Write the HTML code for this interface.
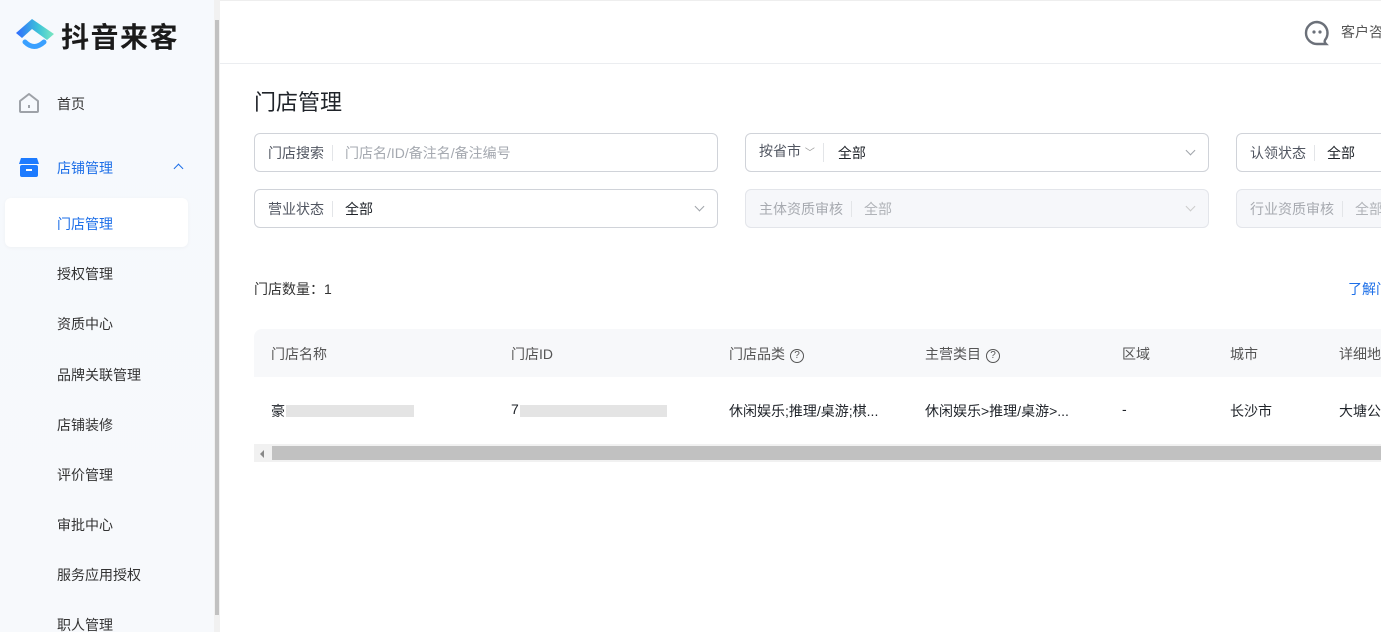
<!DOCTYPE html>
<html><head><meta charset="utf-8"><style>
*{box-sizing:border-box;margin:0;padding:0}
body{width:1381px;height:632px;overflow:hidden;font-family:"Liberation Sans","Noto Sans CJK SC",sans-serif;background:#fff;position:relative;color:#1f2329}
.side{position:absolute;left:0;top:0;width:214px;height:632px;background:linear-gradient(180deg,#f6f9fd,#f7f9fc)}
.sb{position:absolute;left:214px;top:0;width:6px;height:632px;background:#f1f1f1}
.sb div{position:absolute;left:1px;top:20px;width:4px;height:595px;background:#c1c1c1}
.logo{position:absolute;left:61px;top:16px;font-size:28px;font-weight:bold;letter-spacing:1.5px;color:#1b1b1b}
.nav{position:absolute;left:57px;font-size:14px;color:#333}
.act{position:absolute;left:5px;top:198px;width:183px;height:49px;background:#fff;border-radius:6px;box-shadow:0 1px 4px rgba(0,0,0,.04)}
.hdr{position:absolute;left:220px;top:0;right:0;height:64px;border-bottom:1px solid #ebedf0;border-top:1px solid #eee}
.title{position:absolute;left:254px;top:85px;font-size:22px;color:#1f2329}
.inp{position:absolute;height:39px;border:1px solid #d0d3d9;border-radius:6px;font-size:14px;display:flex;align-items:center;padding-left:13px;white-space:nowrap;overflow:hidden}
.inp .l{color:#505560;padding-right:8px;border-right:1px solid #e3e5e8;line-height:16px;margin-right:12px}
.inp.dis{background:#f6f7fa;border-color:#e3e5ea;color:#b0b3b8}
.inp.dis .l{color:#a7aab0}
.chev{position:absolute;right:14px;top:13px;width:7px;height:7px;border-right:1px solid #a0a4aa;border-bottom:1px solid #a0a4aa;transform:rotate(45deg)}
.th{position:absolute;top:329px;left:254px;right:0;height:48px;background:#f7f8fa;border-radius:8px 0 0 0}
.t{position:absolute;font-size:14px;white-space:nowrap}
.q{display:inline-block;width:14px;height:14px;border:1.3px solid #555;border-radius:50%;font-size:10px;text-align:center;line-height:12px;margin-left:5px;vertical-align:1px}
.blur{position:absolute;height:12px;background:#ddd;opacity:.8}
</style></head><body>
<div class="side">
<svg style="position:absolute;left:14px;top:17px" width="42" height="36" viewBox="0 0 42 36"><defs><linearGradient id="g" x1="0" y1="0" x2="1" y2="0"><stop offset="0" stop-color="#2f6bff"/><stop offset=".6" stop-color="#3ec4d8"/><stop offset="1" stop-color="#7be8c0"/></linearGradient></defs><path d="M2 16 L18 2 L40 17 L33 23 L18 12 L8 21 Z" fill="url(#g)"/><path d="M11 25 Q20 34 30 25" stroke="#3aa0ff" stroke-width="5" fill="none" stroke-linecap="round"/></svg>
<div class="logo">抖音来客</div>
<svg style="position:absolute;left:18px;top:92px" width="22" height="22" viewBox="0 0 22 22"><path d="M2 9 L11 2 L20 9 V19 Q20 20 19 20 H3 Q2 20 2 19 Z" fill="none" stroke="#9ea2a8" stroke-width="2" stroke-linejoin="round"/><rect x="10" y="13" width="2" height="3" fill="#9ea2a8"/></svg>
<div class="nav" style="top:94px">首页</div>
<svg style="position:absolute;left:18px;top:157px" width="22" height="22" viewBox="0 0 22 22"><path d="M3 1 H19 L21 7 H1 Z" fill="#1d7bff"/><rect x="2" y="8" width="18" height="12" rx="2" fill="#1d7bff"/><rect x="8" y="12" width="6" height="2" fill="#fff"/></svg>
<div class="nav" style="top:158px;color:#1d6fe8">店铺管理</div>
<div style="position:absolute;left:175px;top:165px;width:7px;height:7px;border-left:1.5px solid #1d6fe8;border-top:1.5px solid #1d6fe8;transform:rotate(45deg)"></div>
<div class="act"></div>
<div class="nav" style="top:214px;color:#1d6fe8">门店管理</div>
<div class="nav" style="top:264px">授权管理</div>
<div class="nav" style="top:314px">资质中心</div>
<div class="nav" style="top:365px">品牌关联管理</div>
<div class="nav" style="top:415px">店铺装修</div>
<div class="nav" style="top:465px">评价管理</div>
<div class="nav" style="top:515px">审批中心</div>
<div class="nav" style="top:565px">服务应用授权</div>
<div class="nav" style="top:615px">职人管理</div>
</div>
<div class="sb"><div></div></div>
<div class="hdr"></div>
<svg style="position:absolute;left:1304px;top:20px" width="26" height="26" viewBox="0 0 26 26"><path d="M13 2 A11 11 0 1 0 13 24 H22 Q20 22 21 20 A11 11 0 0 0 13 2 Z" fill="none" stroke="#6b7079" stroke-width="2.4"/><circle cx="10" cy="12" r="1.6" fill="#6b7079"/><circle cx="16" cy="12" r="1.6" fill="#6b7079"/></svg>
<div class="t" style="left:1341px;top:22px;color:#555">客户咨询</div>
<div class="title">门店管理</div>
<div class="inp" style="left:254px;top:133px;width:464px"><span class="l">门店搜索</span><span style="color:#a5a9b0">门店名/ID/备注名/备注编号</span></div>
<div class="inp" style="left:745px;top:133px;width:464px"><span class="l">按省市 <span style="font-size:10px;color:#999">﹀</span></span><span style="margin-left:2px">全部</span><i class="chev"></i></div>
<div class="inp" style="left:1236px;top:133px;width:200px"><span class="l">认领状态</span><span>全部</span></div>
<div class="inp" style="left:254px;top:189px;width:464px"><span class="l">营业状态</span><span>全部</span><i class="chev"></i></div>
<div class="inp dis" style="left:745px;top:189px;width:464px"><span class="l">主体资质审核</span><span>全部</span><i class="chev" style="border-color:#ccc"></i></div>
<div class="inp dis" style="left:1236px;top:189px;width:200px"><span class="l">行业资质审核</span><span>全部</span></div>
<div class="t" style="left:254px;top:279px;color:#333">门店数量：1</div>
<div class="t" style="left:1348px;top:279px;color:#1d6fe8">了解门店</div>
<div class="th"></div>
<div class="t" style="left:271px;top:344px;color:#555">门店名称</div>
<div class="t" style="left:511px;top:344px;color:#555">门店ID</div>
<div class="t" style="left:729px;top:344px;color:#555">门店品类<span class="q">?</span></div>
<div class="t" style="left:925px;top:344px;color:#555">主营类目<span class="q">?</span></div>
<div class="t" style="left:1122px;top:344px;color:#555">区域</div>
<div class="t" style="left:1230px;top:344px;color:#555">城市</div>
<div class="t" style="left:1339px;top:344px;color:#555">详细地址</div>
<div class="t" style="left:271px;top:401px">豪</div>
<div class="blur" style="left:286px;top:405px;width:128px"></div>
<div class="t" style="left:511px;top:401px">7</div>
<div class="blur" style="left:520px;top:405px;width:147px"></div>
<div class="t" style="left:729px;top:401px">休闲娱乐;推理/桌游;棋...</div>
<div class="t" style="left:925px;top:401px">休闲娱乐&gt;推理/桌游&gt;...</div>
<div class="t" style="left:1122px;top:401px">-</div>
<div class="t" style="left:1230px;top:401px">长沙市</div>
<div class="t" style="left:1339px;top:401px">大塘公</div>
<div style="position:absolute;left:254px;top:444px;right:0;height:18px;background:#f1f1f1"></div>
<div style="position:absolute;left:260px;top:450px;width:0;height:0;border-top:4px solid transparent;border-bottom:4px solid transparent;border-right:4px solid #888"></div>
<div style="position:absolute;left:272px;top:446px;right:0;height:14px;background:#c1c1c1"></div>
</body></html>
